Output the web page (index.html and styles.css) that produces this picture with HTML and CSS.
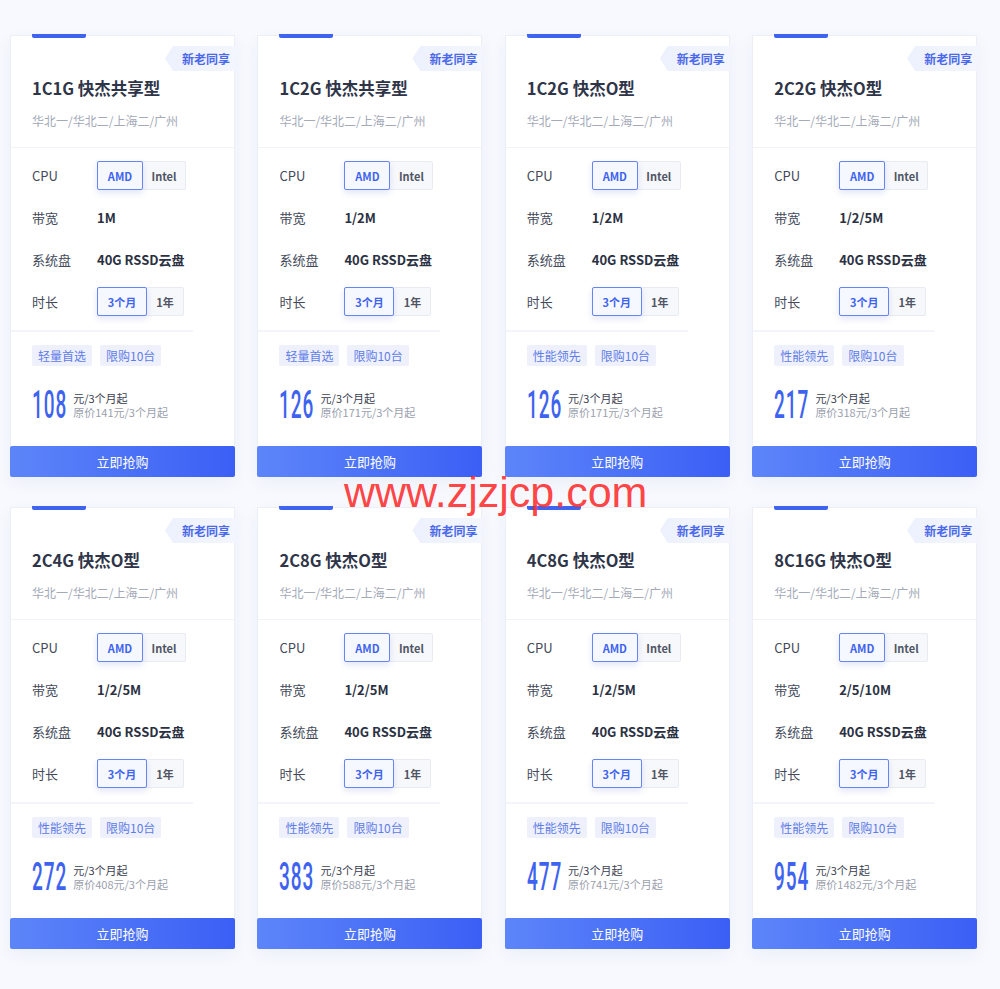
FILE: index.html
```html
<!DOCTYPE html>
<html lang="zh-CN">
<head>
<meta charset="utf-8">
<title>快杰云主机</title>
<link rel="stylesheet" href="styles.css">
</head>
<body>
<div class="page">
  <div class="grid">
    <div class="card">
      <div class="accent"></div>
      <div class="badge">新老同享</div>
      <div class="head"><div class="title">1C1G 快杰共享型</div><div class="region">华北一/华北二/上海二/广州</div></div>
      <div class="body">
        <div class="row"><span class="label">CPU</span><div class="seg"><span class="opt on">AMD</span><span class="opt">Intel</span></div></div>
        <div class="row"><span class="label">带宽</span><span class="val">1M</span></div>
        <div class="row"><span class="label">系统盘</span><span class="val">40G RSSD云盘</span></div>
        <div class="row"><span class="label">时长</span><div class="seg"><span class="opt on m3">3个月</span><span class="opt y1">1年</span></div></div>
      </div>
      <div class="tags"><span class="tag">轻量首选</span><span class="tag">限购10台</span></div>
      <div class="price"><span class="num">108</span><div class="ptext"><div class="unit">元/3个月起</div><div class="orig">原价141元/3个月起</div></div></div>
      <div class="buy">立即抢购</div>
    </div>
    <div class="card">
      <div class="accent"></div>
      <div class="badge">新老同享</div>
      <div class="head"><div class="title">1C2G 快杰共享型</div><div class="region">华北一/华北二/上海二/广州</div></div>
      <div class="body">
        <div class="row"><span class="label">CPU</span><div class="seg"><span class="opt on">AMD</span><span class="opt">Intel</span></div></div>
        <div class="row"><span class="label">带宽</span><span class="val">1/2M</span></div>
        <div class="row"><span class="label">系统盘</span><span class="val">40G RSSD云盘</span></div>
        <div class="row"><span class="label">时长</span><div class="seg"><span class="opt on m3">3个月</span><span class="opt y1">1年</span></div></div>
      </div>
      <div class="tags"><span class="tag">轻量首选</span><span class="tag">限购10台</span></div>
      <div class="price"><span class="num">126</span><div class="ptext"><div class="unit">元/3个月起</div><div class="orig">原价171元/3个月起</div></div></div>
      <div class="buy">立即抢购</div>
    </div>
    <div class="card">
      <div class="accent"></div>
      <div class="badge">新老同享</div>
      <div class="head"><div class="title">1C2G 快杰O型</div><div class="region">华北一/华北二/上海二/广州</div></div>
      <div class="body">
        <div class="row"><span class="label">CPU</span><div class="seg"><span class="opt on">AMD</span><span class="opt">Intel</span></div></div>
        <div class="row"><span class="label">带宽</span><span class="val">1/2M</span></div>
        <div class="row"><span class="label">系统盘</span><span class="val">40G RSSD云盘</span></div>
        <div class="row"><span class="label">时长</span><div class="seg"><span class="opt on m3">3个月</span><span class="opt y1">1年</span></div></div>
      </div>
      <div class="tags"><span class="tag">性能领先</span><span class="tag">限购10台</span></div>
      <div class="price"><span class="num">126</span><div class="ptext"><div class="unit">元/3个月起</div><div class="orig">原价171元/3个月起</div></div></div>
      <div class="buy">立即抢购</div>
    </div>
    <div class="card">
      <div class="accent"></div>
      <div class="badge">新老同享</div>
      <div class="head"><div class="title">2C2G 快杰O型</div><div class="region">华北一/华北二/上海二/广州</div></div>
      <div class="body">
        <div class="row"><span class="label">CPU</span><div class="seg"><span class="opt on">AMD</span><span class="opt">Intel</span></div></div>
        <div class="row"><span class="label">带宽</span><span class="val">1/2/5M</span></div>
        <div class="row"><span class="label">系统盘</span><span class="val">40G RSSD云盘</span></div>
        <div class="row"><span class="label">时长</span><div class="seg"><span class="opt on m3">3个月</span><span class="opt y1">1年</span></div></div>
      </div>
      <div class="tags"><span class="tag">性能领先</span><span class="tag">限购10台</span></div>
      <div class="price"><span class="num">217</span><div class="ptext"><div class="unit">元/3个月起</div><div class="orig">原价318元/3个月起</div></div></div>
      <div class="buy">立即抢购</div>
    </div>
    <div class="card">
      <div class="accent"></div>
      <div class="badge">新老同享</div>
      <div class="head"><div class="title">2C4G 快杰O型</div><div class="region">华北一/华北二/上海二/广州</div></div>
      <div class="body">
        <div class="row"><span class="label">CPU</span><div class="seg"><span class="opt on">AMD</span><span class="opt">Intel</span></div></div>
        <div class="row"><span class="label">带宽</span><span class="val">1/2/5M</span></div>
        <div class="row"><span class="label">系统盘</span><span class="val">40G RSSD云盘</span></div>
        <div class="row"><span class="label">时长</span><div class="seg"><span class="opt on m3">3个月</span><span class="opt y1">1年</span></div></div>
      </div>
      <div class="tags"><span class="tag">性能领先</span><span class="tag">限购10台</span></div>
      <div class="price"><span class="num">272</span><div class="ptext"><div class="unit">元/3个月起</div><div class="orig">原价408元/3个月起</div></div></div>
      <div class="buy">立即抢购</div>
    </div>
    <div class="card">
      <div class="accent"></div>
      <div class="badge">新老同享</div>
      <div class="head"><div class="title">2C8G 快杰O型</div><div class="region">华北一/华北二/上海二/广州</div></div>
      <div class="body">
        <div class="row"><span class="label">CPU</span><div class="seg"><span class="opt on">AMD</span><span class="opt">Intel</span></div></div>
        <div class="row"><span class="label">带宽</span><span class="val">1/2/5M</span></div>
        <div class="row"><span class="label">系统盘</span><span class="val">40G RSSD云盘</span></div>
        <div class="row"><span class="label">时长</span><div class="seg"><span class="opt on m3">3个月</span><span class="opt y1">1年</span></div></div>
      </div>
      <div class="tags"><span class="tag">性能领先</span><span class="tag">限购10台</span></div>
      <div class="price"><span class="num">383</span><div class="ptext"><div class="unit">元/3个月起</div><div class="orig">原价588元/3个月起</div></div></div>
      <div class="buy">立即抢购</div>
    </div>
    <div class="card">
      <div class="accent"></div>
      <div class="badge">新老同享</div>
      <div class="head"><div class="title">4C8G 快杰O型</div><div class="region">华北一/华北二/上海二/广州</div></div>
      <div class="body">
        <div class="row"><span class="label">CPU</span><div class="seg"><span class="opt on">AMD</span><span class="opt">Intel</span></div></div>
        <div class="row"><span class="label">带宽</span><span class="val">1/2/5M</span></div>
        <div class="row"><span class="label">系统盘</span><span class="val">40G RSSD云盘</span></div>
        <div class="row"><span class="label">时长</span><div class="seg"><span class="opt on m3">3个月</span><span class="opt y1">1年</span></div></div>
      </div>
      <div class="tags"><span class="tag">性能领先</span><span class="tag">限购10台</span></div>
      <div class="price"><span class="num">477</span><div class="ptext"><div class="unit">元/3个月起</div><div class="orig">原价741元/3个月起</div></div></div>
      <div class="buy">立即抢购</div>
    </div>
    <div class="card">
      <div class="accent"></div>
      <div class="badge">新老同享</div>
      <div class="head"><div class="title">8C16G 快杰O型</div><div class="region">华北一/华北二/上海二/广州</div></div>
      <div class="body">
        <div class="row"><span class="label">CPU</span><div class="seg"><span class="opt on">AMD</span><span class="opt">Intel</span></div></div>
        <div class="row"><span class="label">带宽</span><span class="val">2/5/10M</span></div>
        <div class="row"><span class="label">系统盘</span><span class="val">40G RSSD云盘</span></div>
        <div class="row"><span class="label">时长</span><div class="seg"><span class="opt on m3">3个月</span><span class="opt y1">1年</span></div></div>
      </div>
      <div class="tags"><span class="tag">性能领先</span><span class="tag">限购10台</span></div>
      <div class="price"><span class="num">954</span><div class="ptext"><div class="unit">元/3个月起</div><div class="orig">原价1482元/3个月起</div></div></div>
      <div class="buy">立即抢购</div>
    </div>
  </div>
  <div class="watermark">www.zjzjcp.com</div>
</div>
<script src="script.js"></script>
</body>
</html>
```
FILE: styles.css
```css
* { box-sizing: border-box; }
html, body { margin: 0; padding: 0; }
body {
  background: #f7f9fe;
  font-family: "Noto Sans CJK SC", "Noto Sans", sans-serif;
  color: #333a4d;
  width: 1000px;
  height: 989px;
  overflow: hidden;
}
.page { position: relative; padding: 35px 0 0 10px; }
.grid {
  display: grid;
  grid-template-columns: repeat(4, 225px);
  column-gap: 22.4px;
  row-gap: 30px;
}
.card {
  position: relative;
  height: 442px;
  background: #fff;
  border: 1px solid #eceff6;
  border-bottom: none;
  box-shadow: 0 6px 16px rgba(40, 60, 140, 0.05);
  display: flex;
  flex-direction: column;
}
.accent {
  position: absolute;
  left: 21px;
  top: -2px;
  width: 54px;
  height: 4px;
  border-radius: 0 0 2px 2px;
  background: #3d63f0;
}
.badge {
  position: absolute;
  right: -1px;
  top: 10px;
  width: 70px;
  height: 25px;
  line-height: 25px;
  padding-left: 17px;
  font-size: 12px;
  font-weight: 700;
  color: #4a68ea;
  background: linear-gradient(90deg, #edf1fd, #f3f6fe);
  clip-path: polygon(8px 0, 100% 0, 100% 100%, 8px 100%, 0 50%);
}
.head {
  padding: 40px 21px 17px;
  border-bottom: 1px solid #f1f3f8;
}
.title {
  font-size: 16.5px;
  line-height: 24px;
  font-weight: 700;
  color: #2f3548;
  margin-bottom: 12px;
}
.region {
  font-size: 12px;
  line-height: 18px;
  color: #a3a9b7;
}
.body {
  width: 182px;
  padding: 13px 0 14px 21px;
  border-bottom: 2px solid #f3f5fb;
  display: flex;
  flex-direction: column;
  gap: 13px;
}
.row {
  display: flex;
  align-items: center;
  height: 29px;
}
.label {
  width: 65px;
  font-size: 13px;
  color: #434959;
}
.val {
  font-size: 13px;
  font-weight: 700;
  color: #2b3142;
}
.seg {
  display: flex;
  height: 29px;
  border: 1px solid #e8ebf2;
  border-radius: 2px;
  background: #f7f8fb;
}
.opt {
  display: flex;
  align-items: center;
  justify-content: center;
  width: 42px;
  font-size: 11px;
  font-weight: 700;
  color: #4f5564;
}
.opt.on {
  width: 46px;
  margin: -1px 0 -1px -1px;
  background: #f6f8ff;
  border: 1px solid #6784f3;
  border-radius: 2px;
  color: #3d63f0;
  box-shadow: 0 3px 6px rgba(60, 90, 200, 0.15);
}
.opt.m3 { width: 50px; }
.opt.y1 { width: 36px; }
.tags {
  display: flex;
  gap: 8px;
  padding: 13px 21px 0;
}
.tag {
  height: 21px;
  line-height: 21px;
  padding: 0 6px;
  font-size: 12px;
  color: #5f7ce8;
  background: #eef1fc;
  border-radius: 2px;
}
.price {
  display: flex;
  align-items: center;
  padding: 24px 21px 0;
  height: 54px;
}
.num {
  display: inline-block;
  font-family: Roboto, "DejaVu Sans", sans-serif;
  font-size: 38px;
  line-height: 30px;
  font-weight: 500;
  color: #3d63f0;
  transform: scaleX(0.5);
  transform-origin: left center;
  letter-spacing: 2px;
}
.ptext {
  margin-left: 6px;
  font-size: 11px;
  line-height: 14px;
}
.unit { color: #3a4052; }
.orig { color: #9aa0ae; }
.buy {
  margin-top: auto;
  margin-left: -1px;
  margin-right: -1px;
  height: 31px;
  line-height: 31px;
  text-align: center;
  font-size: 13px;
  color: #fff;
  border-radius: 2px;
  background: linear-gradient(90deg, #5d85f9, #3b5ff5);
}
.watermark {
  position: absolute;
  left: 344px;
  top: 467px;
  font-family: "Liberation Sans", Arial, sans-serif;
  font-size: 43px;
  line-height: 50px;
  color: rgba(255, 45, 45, 0.9);
  pointer-events: none;
}
```
FILE: script.js
```js
document.querySelectorAll('.num').forEach(function (el) {
  var w = el.getBoundingClientRect().width;
  var full = el.offsetWidth;
  el.style.marginRight = (w - full) + 'px';
});
```
